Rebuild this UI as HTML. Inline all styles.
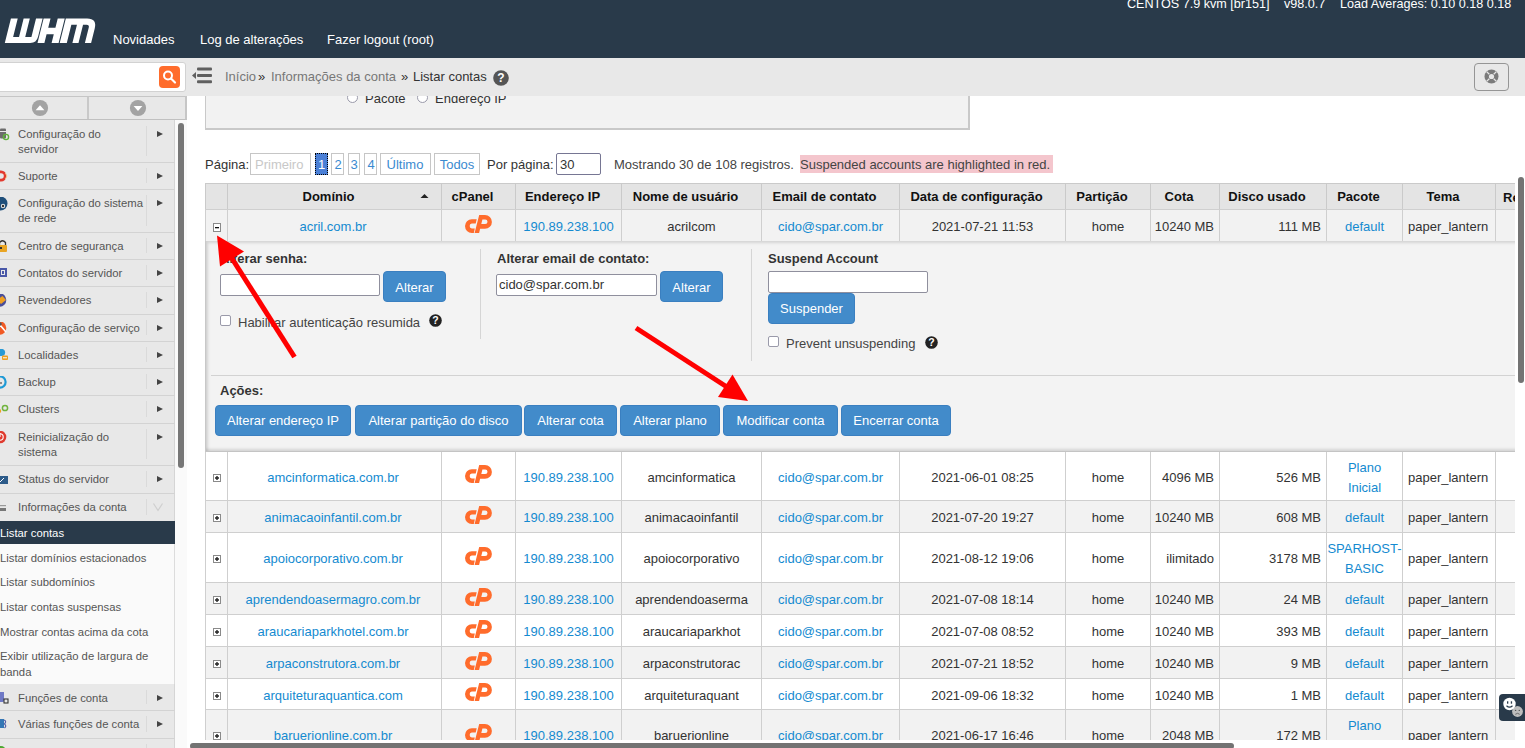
<!DOCTYPE html><html><head><meta charset="utf-8"><title>WHM</title><style>
*{box-sizing:border-box;margin:0;padding:0}
html,body{width:1525px;height:748px;overflow:hidden;background:#fff}
body{position:relative;font-family:"Liberation Sans",sans-serif;font-size:13px;color:#333}
.abs{position:absolute}
.t{position:absolute;white-space:nowrap;line-height:16px}
#hdr{position:absolute;left:0;top:0;width:1525px;height:58px;background:#293a4a}
#hdr .nav{position:absolute;top:33px;color:#fff;font-size:13px;line-height:14px}
#hdr .info{position:absolute;top:-3px;color:#fff;font-size:12.6px;line-height:14px}
#bcbar{position:absolute;left:0;top:58px;width:1525px;height:38px;background:#e8e8e8}
#search{position:absolute;left:-4px;top:62px;width:190px;height:30px;background:#fff;border:1px solid #d2d2d2;border-radius:3px}
#sbtn{position:absolute;left:159px;top:66px;width:21px;height:22px;background:#ff6c2c;border-radius:4px}
#scrollbtns{position:absolute;left:-2px;top:96px;width:189px;height:24px;background:#e8e8e8;border:1px solid #c6c6c6;border-right:2px solid #c6c6c6;border-bottom:1.5px solid #c0c0c0}
.sc{position:absolute;top:100px;width:16px;height:16px;border-radius:50%;background:#a0a0a0}
#menu{position:absolute;left:0;top:120px;width:175px;height:628px;background:#e8e8e8;border-right:1px solid #d5d5d5}
.mi{position:absolute;left:0;width:175px;border-bottom:1px solid #d3d3d3;font-size:11.3px;color:#555;line-height:15px}
.mi .lb{position:absolute;left:18px;white-space:nowrap}
.mi .sep{position:absolute;left:146px;top:6px;bottom:6px;border-left:1px solid #dadada}
.mi .ar{position:absolute;left:157px;width:0;height:0;border-left:6px solid #444;border-top:3.5px solid transparent;border-bottom:3.5px solid transparent}
.sub{position:absolute;left:0;width:175px;font-size:11.3px;color:#555;line-height:15px}
a{color:#148ad0;text-decoration:none}
.box{position:absolute;border:1px solid #c6c6c6;background:#fff;color:#2b8ad0}
table.grid{position:absolute;left:205px;top:183px;border-collapse:collapse;table-layout:fixed;width:1310px}
</style></head><body>
<div id="hdr">
<svg class="abs" style="left:0;top:0" width="100" height="50" viewBox="0 0 100 50"><g transform="matrix(1 0 -0.25 1 6.125 18.5)" fill="#fff"><path d="M4.8 0H11.6V18.4H17.5V0H23.7V18.4H29.9V0H36.5V18.3Q36.5 24.5 30.3 24.5H4.8Z"/><path d="M37.5 0H44.4V9.2H51.6V0H58.6V24.5H51.6V15.8H44.4V24.5H37.5Z"/><path d="M59.7 0H81Q91.1 0 91.1 10V24.5H84.9V9Q84.9 6.3 82 6.3H78.5V24.5H72.4V6.3H66.8V24.5H59.7Z"/></g></svg>
<div class="nav" style="left:113px">Novidades</div>
<div class="nav" style="left:200px">Log de alterações</div>
<div class="nav" style="left:327px">Fazer logout (root)</div>
<div class="info" style="left:1127px">CENTOS 7.9 kvm [br151]</div>
<div class="info" style="left:1284px">v98.0.7</div>
<div class="info" style="left:1340px">Load Averages: 0.10 0.18 0.18</div>
</div>
<div id="bcbar"></div>
<div id="search"></div>
<div id="sbtn"><svg width="21" height="22" viewBox="0 0 21 22"><circle cx="9" cy="9.5" r="4" fill="none" stroke="#fff" stroke-width="2"/><line x1="12" y1="12.5" x2="16" y2="16.5" stroke="#fff" stroke-width="2.2" stroke-linecap="round"/></svg></div>
<svg class="abs" style="left:190px;top:66px" width="24" height="20" viewBox="0 0 24 20"><rect x="7" y="1.5" width="15" height="3" rx="1" fill="#5f5f5f"/><rect x="7" y="8" width="15" height="3" rx="1" fill="#5f5f5f"/><rect x="7" y="14.3" width="15" height="3" rx="1" fill="#5f5f5f"/><path d="M2 9.5L6 6V13Z" fill="#5f5f5f"/></svg>
<div class="t" style="left:225px;top:69px;color:#777;font-size:13px">Início</div>
<div class="t" style="left:258px;top:69px;color:#333">»</div>
<div class="t" style="left:271px;top:69px;color:#777">Informações da conta</div>
<div class="t" style="left:401px;top:69px;color:#333">»</div>
<div class="t" style="left:413px;top:69px;color:#333">Listar contas</div>
<svg class="abs" style="left:493px;top:70px" width="16" height="16" viewBox="0 0 16 16"><circle cx="8" cy="8" r="7.8" fill="#555"/><text x="8" y="12.3" text-anchor="middle" font-family="Liberation Sans" font-weight="bold" font-size="12" fill="#fff">?</text></svg>
<div class="abs" style="left:1474px;top:63px;width:35px;height:28px;border:1.6px solid #959595;border-radius:4px"></div>
<svg class="abs" style="left:1483px;top:68px" width="17" height="17" viewBox="0 0 17 17"><circle cx="8.5" cy="8.5" r="7" fill="#7b7b7b"/><circle cx="8.5" cy="8.5" r="2.6" fill="#e8e8e8"/><g stroke="#e8e8e8" stroke-width="1.3"><line x1="3.6" y1="3.6" x2="6.3" y2="6.3"/><line x1="13.4" y1="3.6" x2="10.7" y2="6.3"/><line x1="3.6" y1="13.4" x2="6.3" y2="10.7"/><line x1="13.4" y1="13.4" x2="10.7" y2="10.7"/></g></svg>
<div id="scrollbtns"><div class="abs" style="left:88px;top:0;bottom:0;border-left:2px solid #c9c9c9"></div></div>
<svg class="abs" style="left:31px;top:99px" width="18" height="18" viewBox="0 0 18 18"><circle cx="9" cy="9" r="8.1" fill="#a3a3a3"/><path d="M4.6 11.3L9 6.2L13.4 11.3Z" fill="#fff"/></svg>
<svg class="abs" style="left:129px;top:99px" width="18" height="18" viewBox="0 0 18 18"><circle cx="9" cy="9" r="8.1" fill="#a3a3a3"/><path d="M4.6 7L9 12.1L13.4 7Z" fill="#fff"/></svg>
<div id="menu"></div>
<div class="mi" style="top:120px;height:43px">
<div class="lb" style="top:7.2px">Configuração do<br>servidor</div>
<div class="sep"></div><div class="ar" style="top:11px"></div>
<svg class="abs" style="left:0;top:8px" width="12" height="14" viewBox="0 0 12 14"><rect x="0" y="0.5" width="6" height="10" rx="1" fill="#6d6d6d"/><rect x="0" y="3" width="6" height="1" fill="#e8e8e8"/><circle cx="6" cy="9" r="2.6" fill="none" stroke="#5fb33b" stroke-width="1.4"/></svg>
</div>
<div class="mi" style="top:162px;height:28px">
<div class="lb" style="top:7.2px">Suporte</div>
<div class="sep"></div><div class="ar" style="top:11px"></div>
<svg class="abs" style="left:0;top:8px" width="12" height="14" viewBox="0 0 12 14"><circle cx="1" cy="6" r="5.5" fill="#e23a2f"/><circle cx="1" cy="6" r="2.8" fill="#e8e8e8"/><path d="M5.3 3 L7 6 L5.3 9" stroke="#f7d88a" fill="none" stroke-width="0.8"/></svg>
</div>
<div class="mi" style="top:189px;height:44px">
<div class="lb" style="top:7.2px">Configuração do sistema<br>de rede</div>
<div class="sep"></div><div class="ar" style="top:11px"></div>
<svg class="abs" style="left:0;top:8px" width="12" height="14" viewBox="0 0 12 14"><circle cx="0.5" cy="6.5" r="7" fill="#1f4f7a"/><circle cx="3" cy="9" r="2.2" fill="#e8e8e8"/><circle cx="3" cy="9" r="1.2" fill="#333"/></svg>
</div>
<div class="mi" style="top:232px;height:28px">
<div class="lb" style="top:7.2px">Centro de segurança</div>
<div class="sep"></div><div class="ar" style="top:11px"></div>
<svg class="abs" style="left:0;top:8px" width="12" height="14" viewBox="0 0 12 14"><rect x="-2" y="5" width="9" height="7" rx="1" fill="#e9a524"/><path d="M-0.5 5 V2.5 Q2.5 -1 5.5 2.5 V5" stroke="#333" stroke-width="1.3" fill="none"/><rect x="0" y="7" width="2" height="2" fill="#333"/></svg>
</div>
<div class="mi" style="top:259px;height:28px">
<div class="lb" style="top:7.2px">Contatos do servidor</div>
<div class="sep"></div><div class="ar" style="top:11px"></div>
<svg class="abs" style="left:0;top:8px" width="12" height="14" viewBox="0 0 12 14"><rect x="-2" y="1" width="9" height="9" fill="#4a58a8"/><rect x="1" y="3" width="4" height="5" fill="#e8e8e8"/><rect x="2" y="4" width="2" height="3" fill="#4a58a8"/></svg>
</div>
<div class="mi" style="top:286px;height:29px">
<div class="lb" style="top:7.2px">Revendedores</div>
<div class="sep"></div><div class="ar" style="top:11px"></div>
<svg class="abs" style="left:0;top:8px" width="12" height="14" viewBox="0 0 12 14"><circle cx="-0.5" cy="6" r="6.8" fill="#4a4f9a"/><path d="M-3 6 L2.5 2 L6 6 L1 10Z" fill="#f0a020"/></svg>
</div>
<div class="mi" style="top:314px;height:28px">
<div class="lb" style="top:7.2px">Configuração de serviço</div>
<div class="sep"></div><div class="ar" style="top:11px"></div>
<svg class="abs" style="left:0;top:8px" width="12" height="14" viewBox="0 0 12 14"><circle cx="-0.5" cy="6" r="6.8" fill="#f15a24"/><path d="M0 3 L6 10" stroke="#fff" stroke-width="1.6"/><circle cx="0" cy="2" r="1.8" fill="#555"/></svg>
</div>
<div class="mi" style="top:341px;height:28px">
<div class="lb" style="top:7.2px">Localidades</div>
<div class="sep"></div><div class="ar" style="top:11px"></div>
<svg class="abs" style="left:0;top:8px" width="12" height="14" viewBox="0 0 12 14"><circle cx="1.5" cy="3.5" r="3.6" fill="#2a9bd6"/><rect x="2" y="6.5" width="6" height="4.5" rx="1" fill="#f0a020"/><rect x="3" y="8.3" width="4" height="1" fill="#fff"/></svg>
</div>
<div class="mi" style="top:368px;height:28px">
<div class="lb" style="top:7.2px">Backup</div>
<div class="sep"></div><div class="ar" style="top:11px"></div>
<svg class="abs" style="left:0;top:8px" width="12" height="14" viewBox="0 0 12 14"><circle cx="0" cy="6" r="5.6" fill="none" stroke="#1e9ad6" stroke-width="2.2"/><path d="M-1 3.5 V7 H2" stroke="#333" stroke-width="1" fill="none"/></svg>
</div>
<div class="mi" style="top:395px;height:29px">
<div class="lb" style="top:7.2px">Clusters</div>
<div class="sep"></div><div class="ar" style="top:11px"></div>
<svg class="abs" style="left:0;top:8px" width="12" height="14" viewBox="0 0 12 14"><circle cx="5" cy="5" r="2.6" fill="none" stroke="#71b43e" stroke-width="1.5"/><circle cx="-1" cy="8" r="2.2" fill="#f0a020"/></svg>
</div>
<div class="mi" style="top:423px;height:43px">
<div class="lb" style="top:7.2px">Reinicialização do<br>sistema</div>
<div class="sep"></div><div class="ar" style="top:11px"></div>
<svg class="abs" style="left:0;top:8px" width="12" height="14" viewBox="0 0 12 14"><circle cx="0" cy="6" r="6.3" fill="#df3b2f"/><circle cx="0" cy="6" r="3.2" fill="none" stroke="#fff" stroke-width="1.1"/><path d="M0 2 V6" stroke="#fff" stroke-width="1.1"/></svg>
</div>
<div class="mi" style="top:465px;height:29px">
<div class="lb" style="top:7.2px">Status do servidor</div>
<div class="sep"></div><div class="ar" style="top:11px"></div>
<svg class="abs" style="left:0;top:8px" width="12" height="14" viewBox="0 0 12 14"><rect x="-3" y="3" width="11" height="8" fill="#2d5c8a"/><path d="M0 9 L4 5" stroke="#fff" stroke-width="1"/></svg>
</div>
<div class="mi" style="top:493px;height:29px">
<div class="lb" style="top:7.2px">Informações da conta</div>
<div class="sep"></div><svg class="abs" style="left:152px;top:9px" width="12" height="10" viewBox="0 0 12 10"><path d="M1.5 1.5 L6 8.5 L10.5 1.5" stroke="#cfcfcf" stroke-width="1.2" fill="none"/></svg>
<svg class="abs" style="left:0;top:8px" width="12" height="14" viewBox="0 0 12 14"><rect x="-2" y="4" width="8" height="1.2" fill="#999"/><rect x="-2" y="7" width="8" height="3" fill="#777"/></svg>
</div>
<div class="mi" style="top:684px;height:27px">
<div class="lb" style="top:7.2px">Funções de conta</div>
<div class="sep"></div><div class="ar" style="top:11px"></div>
<svg class="abs" style="left:0;top:8px" width="12" height="14" viewBox="0 0 12 14"><rect x="-2" y="-1" width="6" height="11" rx="1.5" fill="#6f79c6"/><rect x="4" y="7" width="4" height="4" fill="none" stroke="#333" stroke-width="1.1"/></svg>
</div>
<div class="mi" style="top:710px;height:29px">
<div class="lb" style="top:7.2px">Várias funções de conta</div>
<div class="sep"></div><div class="ar" style="top:11px"></div>
<svg class="abs" style="left:0;top:8px" width="12" height="14" viewBox="0 0 12 14"><rect x="-2" y="1" width="6" height="9" fill="#3477b5"/><path d="M4 2 Q7 3 4.5 6 Q7 8 4.5 10" stroke="#5560a8" stroke-width="1.2" fill="none"/></svg>
</div>
<div class="mi" style="top:738px;height:33px">
<div class="lb" style="top:7.2px">Transferências</div>
<div class="sep"></div><div class="ar" style="top:11px"></div>
<svg class="abs" style="left:0;top:8px" width="12" height="14" viewBox="0 0 12 14"><circle cx="1" cy="5" r="5" fill="#4ea832"/></svg>
</div>
<div class="abs" style="left:0;top:521px;width:175px;height:23px;background:#293a4a"></div>
<div class="t" style="left:0px;top:526px;color:#fff;font-size:11.3px;line-height:15px">Listar contas</div>
<div class="abs" style="left:0;top:544px;width:175px;height:140px;background:#fafafa;border-right:1px solid #dcdcdc"></div>
<div class="t" style="left:0px;top:551.1px;color:#555;font-size:11.3px;line-height:15px">Listar domínios estacionados</div>
<div class="t" style="left:0px;top:574.6px;color:#555;font-size:11.3px;line-height:15px">Listar subdomínios</div>
<div class="t" style="left:0px;top:599.6px;color:#555;font-size:11.3px;line-height:15px">Listar contas suspensas</div>
<div class="t" style="left:0px;top:624.6px;color:#555;font-size:11.3px;line-height:15px">Mostrar contas acima da cota</div>
<div class="t" style="left:0px;top:648.6px;color:#555;font-size:11.3px;line-height:15px">Exibir utilização de largura de</div>
<div class="t" style="left:0px;top:664.6px;color:#555;font-size:11.3px;line-height:15px">banda</div>
<div class="abs" style="left:175px;top:120px;width:12px;height:628px;background:#fafafa"></div>
<div class="abs" style="left:178px;top:123px;width:6px;height:345px;background:#777;border-radius:3px"></div>
<div class="abs" style="left:0;top:96px;width:1525px;height:40px;overflow:hidden"><div class="abs" style="left:0;top:-96px;width:1525px;height:200px">
<div class="abs" style="left:205px;top:60px;width:765px;height:70px;background:#f2f2f2;border:1px solid #c9c9c9;border-right-width:2px;border-bottom-width:2px"></div>
<div class="abs" style="left:347px;top:92px;width:11px;height:11px;border-radius:50%;border:1px solid #9a9aaa;background:#fff"></div>
<div class="t" style="left:365px;top:91px">Pacote</div>
<div class="abs" style="left:417px;top:92px;width:11px;height:11px;border-radius:50%;border:1px solid #9a9aaa;background:#fff"></div>
<div class="t" style="left:435px;top:91px">Endereço IP</div>
</div></div>
<div class="t" style="left:205px;top:157px;color:#333">Página:</div>
<div class="box" style="left:250px;top:153px;width:61px;height:22px;color:#c8c8c8"><span class="t" style="left:4px;top:3px">Primeiro</span></div>
<div class="abs" style="left:315px;top:153px;width:13px;height:22px;background:#4a7fd6;border:1px dotted #000"><span class="t" style="left:2px;top:3px;color:#fff">1</span></div>
<div class="box" style="left:331px;top:153px;width:13px;height:22px"><span class="t" style="left:6px;transform:translateX(-50%);top:3px;color:#3a8ad0">2</span></div>
<div class="box" style="left:348px;top:153px;width:12px;height:22px"><span class="t" style="left:5px;transform:translateX(-50%);top:3px;color:#3a8ad0">3</span></div>
<div class="box" style="left:364px;top:153px;width:13px;height:22px"><span class="t" style="left:6px;transform:translateX(-50%);top:3px;color:#3a8ad0">4</span></div>
<div class="box" style="left:380px;top:153px;width:51px;height:22px"><span class="t" style="left:24px;transform:translateX(-50%);top:3px;color:#3a8ad0">Último</span></div>
<div class="box" style="left:434px;top:153px;width:46px;height:22px"><span class="t" style="left:22px;transform:translateX(-50%);top:3px;color:#3a8ad0">Todos</span></div>
<div class="t" style="left:487px;top:157px">Por página:</div>
<div class="abs" style="left:556px;top:153px;width:45px;height:22px;border:1px solid #767693;border-radius:2px;background:#fff"><span class="t" style="left:3px;top:3px;color:#333">30</span></div>
<div class="t" style="left:614px;top:157px;color:#444">Mostrando 30 de 108 registros.</div>
<div class="abs" style="left:800px;top:155px;width:253px;height:18px;background:#f4c6cd"></div>
<div class="t" style="left:800px;top:157px;color:#444">Suspended accounts are highlighted in red.</div>
<div class="abs" style="left:0;top:0;width:1515px;height:740px;overflow:hidden">
<div class="abs" style="left:205px;top:183px;width:1400px;height:27px;background:#e4e4e4;border-top:1px solid #cacaca;border-bottom:1px solid #cacaca"></div>
<div class="abs" style="left:205px;top:183px;width:1px;height:27px;background:#cacaca"></div>
<div class="abs" style="left:227px;top:183px;width:1px;height:27px;background:#cacaca"></div>
<div class="abs" style="left:441px;top:183px;width:1px;height:27px;background:#cacaca"></div>
<div class="abs" style="left:515px;top:183px;width:1px;height:27px;background:#cacaca"></div>
<div class="abs" style="left:621px;top:183px;width:1px;height:27px;background:#cacaca"></div>
<div class="abs" style="left:761px;top:183px;width:1px;height:27px;background:#cacaca"></div>
<div class="abs" style="left:899px;top:183px;width:1px;height:27px;background:#cacaca"></div>
<div class="abs" style="left:1065px;top:183px;width:1px;height:27px;background:#cacaca"></div>
<div class="abs" style="left:1150px;top:183px;width:1px;height:27px;background:#cacaca"></div>
<div class="abs" style="left:1219px;top:183px;width:1px;height:27px;background:#cacaca"></div>
<div class="abs" style="left:1326px;top:183px;width:1px;height:27px;background:#cacaca"></div>
<div class="abs" style="left:1402px;top:183px;width:1px;height:27px;background:#cacaca"></div>
<div class="abs" style="left:1495px;top:183px;width:1px;height:27px;background:#cacaca"></div>
<div class="abs" style="left:228px;top:184px;width:201px;height:25px;line-height:20px;padding-top:2.5px;text-align:center;font-weight:bold;color:#111;white-space:nowrap">Domínio</div>
<div class="abs" style="left:442px;top:184px;width:61px;height:25px;line-height:20px;padding-top:2.5px;text-align:center;font-weight:bold;color:#111;white-space:nowrap">cPanel</div>
<div class="abs" style="left:516px;top:184px;width:93px;height:25px;line-height:20px;padding-top:2.5px;text-align:center;font-weight:bold;color:#111;white-space:nowrap">Endereço IP</div>
<div class="abs" style="left:622px;top:184px;width:127px;height:25px;line-height:20px;padding-top:2.5px;text-align:center;font-weight:bold;color:#111;white-space:nowrap">Nome de usuário</div>
<div class="abs" style="left:762px;top:184px;width:125px;height:25px;line-height:20px;padding-top:2.5px;text-align:center;font-weight:bold;color:#111;white-space:nowrap">Email de contato</div>
<div class="abs" style="left:900px;top:184px;width:153px;height:25px;line-height:20px;padding-top:2.5px;text-align:center;font-weight:bold;color:#111;white-space:nowrap">Data de configuração</div>
<div class="abs" style="left:1066px;top:184px;width:72px;height:25px;line-height:20px;padding-top:2.5px;text-align:center;font-weight:bold;color:#111;white-space:nowrap">Partição</div>
<div class="abs" style="left:1151px;top:184px;width:56px;height:25px;line-height:20px;padding-top:2.5px;text-align:center;font-weight:bold;color:#111;white-space:nowrap">Cota</div>
<div class="abs" style="left:1220px;top:184px;width:94px;height:25px;line-height:20px;padding-top:2.5px;text-align:center;font-weight:bold;color:#111;white-space:nowrap">Disco usado</div>
<div class="abs" style="left:1327px;top:184px;width:63px;height:25px;line-height:20px;padding-top:2.5px;text-align:center;font-weight:bold;color:#111;white-space:nowrap">Pacote</div>
<div class="abs" style="left:1403px;top:184px;width:80px;height:25px;line-height:20px;padding-top:2.5px;text-align:center;font-weight:bold;color:#111;white-space:nowrap">Tema</div>
<div class="t" style="left:1503px;top:188px;line-height:20px;font-weight:bold;color:#111">Revendedor</div>
<svg class="abs" style="left:420px;top:193px" width="9" height="6" viewBox="0 0 9 6"><path d="M0.5 5L4.5 1L8.5 5Z" fill="#222"/></svg>
<div class="abs" style="left:205px;top:209px;width:1400px;height:33px;background:#f2f2f2;border-top:1px solid #cfcfcf;border-bottom:1px solid #cfcfcf"></div>
<div class="abs" style="left:205px;top:209px;width:1px;height:33px;background:#cfcfcf"></div>
<div class="abs" style="left:227px;top:209px;width:1px;height:33px;background:#cfcfcf"></div>
<div class="abs" style="left:441px;top:209px;width:1px;height:33px;background:#cfcfcf"></div>
<div class="abs" style="left:515px;top:209px;width:1px;height:33px;background:#cfcfcf"></div>
<div class="abs" style="left:621px;top:209px;width:1px;height:33px;background:#cfcfcf"></div>
<div class="abs" style="left:761px;top:209px;width:1px;height:33px;background:#cfcfcf"></div>
<div class="abs" style="left:899px;top:209px;width:1px;height:33px;background:#cfcfcf"></div>
<div class="abs" style="left:1065px;top:209px;width:1px;height:33px;background:#cfcfcf"></div>
<div class="abs" style="left:1150px;top:209px;width:1px;height:33px;background:#cfcfcf"></div>
<div class="abs" style="left:1219px;top:209px;width:1px;height:33px;background:#cfcfcf"></div>
<div class="abs" style="left:1326px;top:209px;width:1px;height:33px;background:#cfcfcf"></div>
<div class="abs" style="left:1402px;top:209px;width:1px;height:33px;background:#cfcfcf"></div>
<div class="abs" style="left:1495px;top:209px;width:1px;height:33px;background:#cfcfcf"></div>
<svg class="abs" style="left:213px;top:223px" width="8" height="9" viewBox="0 0 8 9"><rect x="0.5" y="0.5" width="7" height="8" fill="#fff" stroke="#8a8a8a"/><rect x="2" y="4" width="4" height="1.3" fill="#111"/></svg>
<div class="abs" style="left:225px;top:210px;width:216px;height:31px;display:flex;align-items:center;justify-content:center;padding:0 6px;color:#333"><div style="position:relative;top:1.5px;line-height:20px;text-align:center;white-space:nowrap"><a>acril.com.br</a></div></div>
<svg class="abs" style="left:455px;top:210px" width="40" height="30" viewBox="0 0 40 30"><path d="M21.7 9.3H16.8A6.8 6.8 0 0 0 16.8 22.9H18.8L19.8 18.6H16.8A2.65 2.65 0 0 1 16.8 13.4H20.7Z" fill="#ff6c2c"/><path fill-rule="evenodd" d="M19.6 22.9H24.1L25.1 18.8H30A6.9 6.9 0 0 0 30 5H24.2ZM27.4 9.4H30.2A2.3 2.3 0 0 1 30.2 14H26.3Z" fill="#ff6c2c"/></svg>
<div class="abs" style="left:516px;top:210px;width:105px;height:31px;display:flex;align-items:center;justify-content:center;padding:0 6px;color:#333"><div style="position:relative;top:1.5px;line-height:20px;text-align:center;white-space:nowrap"><a>190.89.238.100</a></div></div>
<div class="abs" style="left:622px;top:210px;width:139px;height:31px;display:flex;align-items:center;justify-content:center;padding:0 6px;color:#333"><div style="position:relative;top:1.5px;line-height:20px;text-align:center;white-space:nowrap">acrilcom</div></div>
<div class="abs" style="left:762px;top:210px;width:137px;height:31px;display:flex;align-items:center;justify-content:center;padding:0 6px;color:#333"><div style="position:relative;top:1.5px;line-height:20px;text-align:center;white-space:nowrap"><a>cido@spar.com.br</a></div></div>
<div class="abs" style="left:900px;top:210px;width:165px;height:31px;display:flex;align-items:center;justify-content:center;padding:0 6px;color:#333"><div style="position:relative;top:1.5px;line-height:20px;text-align:center;white-space:nowrap">2021-07-21 11:53</div></div>
<div class="abs" style="left:1066px;top:210px;width:84px;height:31px;display:flex;align-items:center;justify-content:center;padding:0 6px;color:#333"><div style="position:relative;top:1.5px;line-height:20px;text-align:center;white-space:nowrap">home</div></div>
<div class="abs" style="left:1151px;top:210px;width:68px;height:31px;display:flex;align-items:center;justify-content:flex-end;padding:0 5px;color:#333"><div style="position:relative;top:1.5px;line-height:20px;text-align:center;white-space:nowrap">10240 MB</div></div>
<div class="abs" style="left:1220px;top:210px;width:106px;height:31px;display:flex;align-items:center;justify-content:flex-end;padding:0 5px;color:#333"><div style="position:relative;top:1.5px;line-height:20px;text-align:center;white-space:nowrap">111 MB</div></div>
<div class="abs" style="left:1327px;top:210px;width:75px;height:31px;display:flex;align-items:center;justify-content:center;padding:0 6px;color:#333"><div style="position:relative;top:1.5px;line-height:20px;text-align:center;white-space:nowrap"><a>default</a></div></div>
<div class="abs" style="left:1403px;top:210px;width:92px;height:31px;display:flex;align-items:center;justify-content:flex-start;padding:0 5px;color:#333"><div style="position:relative;top:1.5px;line-height:20px;text-align:center;white-space:nowrap">paper_lantern</div></div>
<div class="abs" style="left:205px;top:451px;width:1400px;height:50px;background:#fff;border-top:1px solid #cfcfcf;border-bottom:1px solid #cfcfcf"></div>
<div class="abs" style="left:205px;top:451px;width:1px;height:50px;background:#cfcfcf"></div>
<div class="abs" style="left:227px;top:451px;width:1px;height:50px;background:#cfcfcf"></div>
<div class="abs" style="left:441px;top:451px;width:1px;height:50px;background:#cfcfcf"></div>
<div class="abs" style="left:515px;top:451px;width:1px;height:50px;background:#cfcfcf"></div>
<div class="abs" style="left:621px;top:451px;width:1px;height:50px;background:#cfcfcf"></div>
<div class="abs" style="left:761px;top:451px;width:1px;height:50px;background:#cfcfcf"></div>
<div class="abs" style="left:899px;top:451px;width:1px;height:50px;background:#cfcfcf"></div>
<div class="abs" style="left:1065px;top:451px;width:1px;height:50px;background:#cfcfcf"></div>
<div class="abs" style="left:1150px;top:451px;width:1px;height:50px;background:#cfcfcf"></div>
<div class="abs" style="left:1219px;top:451px;width:1px;height:50px;background:#cfcfcf"></div>
<div class="abs" style="left:1326px;top:451px;width:1px;height:50px;background:#cfcfcf"></div>
<div class="abs" style="left:1402px;top:451px;width:1px;height:50px;background:#cfcfcf"></div>
<div class="abs" style="left:1495px;top:451px;width:1px;height:50px;background:#cfcfcf"></div>
<svg class="abs" style="left:213px;top:474px" width="8" height="8" viewBox="0 0 8 8"><rect x="0.5" y="0.5" width="7" height="7" fill="#fff" stroke="#8a8a8a"/><path d="M3 2.2H5V3H5.8V5H5V5.8H3V5H2.2V3H3Z" fill="#333"/></svg>
<div class="abs" style="left:225px;top:452px;width:216px;height:48px;display:flex;align-items:center;justify-content:center;padding:0 6px;color:#333"><div style="position:relative;top:1.5px;line-height:20px;text-align:center;white-space:nowrap"><a>amcinformatica.com.br</a></div></div>
<svg class="abs" style="left:455px;top:460px" width="40" height="30" viewBox="0 0 40 30"><path d="M21.7 9.3H16.8A6.8 6.8 0 0 0 16.8 22.9H18.8L19.8 18.6H16.8A2.65 2.65 0 0 1 16.8 13.4H20.7Z" fill="#ff6c2c"/><path fill-rule="evenodd" d="M19.6 22.9H24.1L25.1 18.8H30A6.9 6.9 0 0 0 30 5H24.2ZM27.4 9.4H30.2A2.3 2.3 0 0 1 30.2 14H26.3Z" fill="#ff6c2c"/></svg>
<div class="abs" style="left:516px;top:452px;width:105px;height:48px;display:flex;align-items:center;justify-content:center;padding:0 6px;color:#333"><div style="position:relative;top:1.5px;line-height:20px;text-align:center;white-space:nowrap"><a>190.89.238.100</a></div></div>
<div class="abs" style="left:622px;top:452px;width:139px;height:48px;display:flex;align-items:center;justify-content:center;padding:0 6px;color:#333"><div style="position:relative;top:1.5px;line-height:20px;text-align:center;white-space:nowrap">amcinformatica</div></div>
<div class="abs" style="left:762px;top:452px;width:137px;height:48px;display:flex;align-items:center;justify-content:center;padding:0 6px;color:#333"><div style="position:relative;top:1.5px;line-height:20px;text-align:center;white-space:nowrap"><a>cido@spar.com.br</a></div></div>
<div class="abs" style="left:900px;top:452px;width:165px;height:48px;display:flex;align-items:center;justify-content:center;padding:0 6px;color:#333"><div style="position:relative;top:1.5px;line-height:20px;text-align:center;white-space:nowrap">2021-06-01 08:25</div></div>
<div class="abs" style="left:1066px;top:452px;width:84px;height:48px;display:flex;align-items:center;justify-content:center;padding:0 6px;color:#333"><div style="position:relative;top:1.5px;line-height:20px;text-align:center;white-space:nowrap">home</div></div>
<div class="abs" style="left:1151px;top:452px;width:68px;height:48px;display:flex;align-items:center;justify-content:flex-end;padding:0 5px;color:#333"><div style="position:relative;top:1.5px;line-height:20px;text-align:center;white-space:nowrap">4096 MB</div></div>
<div class="abs" style="left:1220px;top:452px;width:106px;height:48px;display:flex;align-items:center;justify-content:flex-end;padding:0 5px;color:#333"><div style="position:relative;top:1.5px;line-height:20px;text-align:center;white-space:nowrap">526 MB</div></div>
<div class="abs" style="left:1327px;top:452px;width:75px;height:48px;display:flex;align-items:center;justify-content:center;padding:0 6px;color:#333"><div style="position:relative;top:1.5px;line-height:20px;text-align:center;white-space:nowrap"><a>Plano<br>Inicial</a></div></div>
<div class="abs" style="left:1403px;top:452px;width:92px;height:48px;display:flex;align-items:center;justify-content:flex-start;padding:0 5px;color:#333"><div style="position:relative;top:1.5px;line-height:20px;text-align:center;white-space:nowrap">paper_lantern</div></div>
<div class="abs" style="left:205px;top:500px;width:1400px;height:33px;background:#f2f2f2;border-top:1px solid #cfcfcf;border-bottom:1px solid #cfcfcf"></div>
<div class="abs" style="left:205px;top:500px;width:1px;height:33px;background:#cfcfcf"></div>
<div class="abs" style="left:227px;top:500px;width:1px;height:33px;background:#cfcfcf"></div>
<div class="abs" style="left:441px;top:500px;width:1px;height:33px;background:#cfcfcf"></div>
<div class="abs" style="left:515px;top:500px;width:1px;height:33px;background:#cfcfcf"></div>
<div class="abs" style="left:621px;top:500px;width:1px;height:33px;background:#cfcfcf"></div>
<div class="abs" style="left:761px;top:500px;width:1px;height:33px;background:#cfcfcf"></div>
<div class="abs" style="left:899px;top:500px;width:1px;height:33px;background:#cfcfcf"></div>
<div class="abs" style="left:1065px;top:500px;width:1px;height:33px;background:#cfcfcf"></div>
<div class="abs" style="left:1150px;top:500px;width:1px;height:33px;background:#cfcfcf"></div>
<div class="abs" style="left:1219px;top:500px;width:1px;height:33px;background:#cfcfcf"></div>
<div class="abs" style="left:1326px;top:500px;width:1px;height:33px;background:#cfcfcf"></div>
<div class="abs" style="left:1402px;top:500px;width:1px;height:33px;background:#cfcfcf"></div>
<div class="abs" style="left:1495px;top:500px;width:1px;height:33px;background:#cfcfcf"></div>
<svg class="abs" style="left:213px;top:514px" width="8" height="8" viewBox="0 0 8 8"><rect x="0.5" y="0.5" width="7" height="7" fill="#fff" stroke="#8a8a8a"/><path d="M3 2.2H5V3H5.8V5H5V5.8H3V5H2.2V3H3Z" fill="#333"/></svg>
<div class="abs" style="left:225px;top:501px;width:216px;height:31px;display:flex;align-items:center;justify-content:center;padding:0 6px;color:#333"><div style="position:relative;top:1.5px;line-height:20px;text-align:center;white-space:nowrap"><a>animacaoinfantil.com.br</a></div></div>
<svg class="abs" style="left:455px;top:501px" width="40" height="30" viewBox="0 0 40 30"><path d="M21.7 9.3H16.8A6.8 6.8 0 0 0 16.8 22.9H18.8L19.8 18.6H16.8A2.65 2.65 0 0 1 16.8 13.4H20.7Z" fill="#ff6c2c"/><path fill-rule="evenodd" d="M19.6 22.9H24.1L25.1 18.8H30A6.9 6.9 0 0 0 30 5H24.2ZM27.4 9.4H30.2A2.3 2.3 0 0 1 30.2 14H26.3Z" fill="#ff6c2c"/></svg>
<div class="abs" style="left:516px;top:501px;width:105px;height:31px;display:flex;align-items:center;justify-content:center;padding:0 6px;color:#333"><div style="position:relative;top:1.5px;line-height:20px;text-align:center;white-space:nowrap"><a>190.89.238.100</a></div></div>
<div class="abs" style="left:622px;top:501px;width:139px;height:31px;display:flex;align-items:center;justify-content:center;padding:0 6px;color:#333"><div style="position:relative;top:1.5px;line-height:20px;text-align:center;white-space:nowrap">animacaoinfantil</div></div>
<div class="abs" style="left:762px;top:501px;width:137px;height:31px;display:flex;align-items:center;justify-content:center;padding:0 6px;color:#333"><div style="position:relative;top:1.5px;line-height:20px;text-align:center;white-space:nowrap"><a>cido@spar.com.br</a></div></div>
<div class="abs" style="left:900px;top:501px;width:165px;height:31px;display:flex;align-items:center;justify-content:center;padding:0 6px;color:#333"><div style="position:relative;top:1.5px;line-height:20px;text-align:center;white-space:nowrap">2021-07-20 19:27</div></div>
<div class="abs" style="left:1066px;top:501px;width:84px;height:31px;display:flex;align-items:center;justify-content:center;padding:0 6px;color:#333"><div style="position:relative;top:1.5px;line-height:20px;text-align:center;white-space:nowrap">home</div></div>
<div class="abs" style="left:1151px;top:501px;width:68px;height:31px;display:flex;align-items:center;justify-content:flex-end;padding:0 5px;color:#333"><div style="position:relative;top:1.5px;line-height:20px;text-align:center;white-space:nowrap">10240 MB</div></div>
<div class="abs" style="left:1220px;top:501px;width:106px;height:31px;display:flex;align-items:center;justify-content:flex-end;padding:0 5px;color:#333"><div style="position:relative;top:1.5px;line-height:20px;text-align:center;white-space:nowrap">608 MB</div></div>
<div class="abs" style="left:1327px;top:501px;width:75px;height:31px;display:flex;align-items:center;justify-content:center;padding:0 6px;color:#333"><div style="position:relative;top:1.5px;line-height:20px;text-align:center;white-space:nowrap"><a>default</a></div></div>
<div class="abs" style="left:1403px;top:501px;width:92px;height:31px;display:flex;align-items:center;justify-content:flex-start;padding:0 5px;color:#333"><div style="position:relative;top:1.5px;line-height:20px;text-align:center;white-space:nowrap">paper_lantern</div></div>
<div class="abs" style="left:205px;top:532px;width:1400px;height:51px;background:#fff;border-top:1px solid #cfcfcf;border-bottom:1px solid #cfcfcf"></div>
<div class="abs" style="left:205px;top:532px;width:1px;height:51px;background:#cfcfcf"></div>
<div class="abs" style="left:227px;top:532px;width:1px;height:51px;background:#cfcfcf"></div>
<div class="abs" style="left:441px;top:532px;width:1px;height:51px;background:#cfcfcf"></div>
<div class="abs" style="left:515px;top:532px;width:1px;height:51px;background:#cfcfcf"></div>
<div class="abs" style="left:621px;top:532px;width:1px;height:51px;background:#cfcfcf"></div>
<div class="abs" style="left:761px;top:532px;width:1px;height:51px;background:#cfcfcf"></div>
<div class="abs" style="left:899px;top:532px;width:1px;height:51px;background:#cfcfcf"></div>
<div class="abs" style="left:1065px;top:532px;width:1px;height:51px;background:#cfcfcf"></div>
<div class="abs" style="left:1150px;top:532px;width:1px;height:51px;background:#cfcfcf"></div>
<div class="abs" style="left:1219px;top:532px;width:1px;height:51px;background:#cfcfcf"></div>
<div class="abs" style="left:1326px;top:532px;width:1px;height:51px;background:#cfcfcf"></div>
<div class="abs" style="left:1402px;top:532px;width:1px;height:51px;background:#cfcfcf"></div>
<div class="abs" style="left:1495px;top:532px;width:1px;height:51px;background:#cfcfcf"></div>
<svg class="abs" style="left:213px;top:555px" width="8" height="8" viewBox="0 0 8 8"><rect x="0.5" y="0.5" width="7" height="7" fill="#fff" stroke="#8a8a8a"/><path d="M3 2.2H5V3H5.8V5H5V5.8H3V5H2.2V3H3Z" fill="#333"/></svg>
<div class="abs" style="left:225px;top:533px;width:216px;height:49px;display:flex;align-items:center;justify-content:center;padding:0 6px;color:#333"><div style="position:relative;top:1.5px;line-height:20px;text-align:center;white-space:nowrap"><a>apoiocorporativo.com.br</a></div></div>
<svg class="abs" style="left:455px;top:542px" width="40" height="30" viewBox="0 0 40 30"><path d="M21.7 9.3H16.8A6.8 6.8 0 0 0 16.8 22.9H18.8L19.8 18.6H16.8A2.65 2.65 0 0 1 16.8 13.4H20.7Z" fill="#ff6c2c"/><path fill-rule="evenodd" d="M19.6 22.9H24.1L25.1 18.8H30A6.9 6.9 0 0 0 30 5H24.2ZM27.4 9.4H30.2A2.3 2.3 0 0 1 30.2 14H26.3Z" fill="#ff6c2c"/></svg>
<div class="abs" style="left:516px;top:533px;width:105px;height:49px;display:flex;align-items:center;justify-content:center;padding:0 6px;color:#333"><div style="position:relative;top:1.5px;line-height:20px;text-align:center;white-space:nowrap"><a>190.89.238.100</a></div></div>
<div class="abs" style="left:622px;top:533px;width:139px;height:49px;display:flex;align-items:center;justify-content:center;padding:0 6px;color:#333"><div style="position:relative;top:1.5px;line-height:20px;text-align:center;white-space:nowrap">apoiocorporativo</div></div>
<div class="abs" style="left:762px;top:533px;width:137px;height:49px;display:flex;align-items:center;justify-content:center;padding:0 6px;color:#333"><div style="position:relative;top:1.5px;line-height:20px;text-align:center;white-space:nowrap"><a>cido@spar.com.br</a></div></div>
<div class="abs" style="left:900px;top:533px;width:165px;height:49px;display:flex;align-items:center;justify-content:center;padding:0 6px;color:#333"><div style="position:relative;top:1.5px;line-height:20px;text-align:center;white-space:nowrap">2021-08-12 19:06</div></div>
<div class="abs" style="left:1066px;top:533px;width:84px;height:49px;display:flex;align-items:center;justify-content:center;padding:0 6px;color:#333"><div style="position:relative;top:1.5px;line-height:20px;text-align:center;white-space:nowrap">home</div></div>
<div class="abs" style="left:1151px;top:533px;width:68px;height:49px;display:flex;align-items:center;justify-content:flex-end;padding:0 5px;color:#333"><div style="position:relative;top:1.5px;line-height:20px;text-align:center;white-space:nowrap">ilimitado</div></div>
<div class="abs" style="left:1220px;top:533px;width:106px;height:49px;display:flex;align-items:center;justify-content:flex-end;padding:0 5px;color:#333"><div style="position:relative;top:1.5px;line-height:20px;text-align:center;white-space:nowrap">3178 MB</div></div>
<div class="abs" style="left:1327px;top:533px;width:75px;height:49px;display:flex;align-items:center;justify-content:center;padding:0 6px;color:#333"><div style="position:relative;top:1.5px;line-height:20px;text-align:center;white-space:nowrap"><a>SPARHOST-<br>BASIC</a></div></div>
<div class="abs" style="left:1403px;top:533px;width:92px;height:49px;display:flex;align-items:center;justify-content:flex-start;padding:0 5px;color:#333"><div style="position:relative;top:1.5px;line-height:20px;text-align:center;white-space:nowrap">paper_lantern</div></div>
<div class="abs" style="left:205px;top:582px;width:1400px;height:33px;background:#f2f2f2;border-top:1px solid #cfcfcf;border-bottom:1px solid #cfcfcf"></div>
<div class="abs" style="left:205px;top:582px;width:1px;height:33px;background:#cfcfcf"></div>
<div class="abs" style="left:227px;top:582px;width:1px;height:33px;background:#cfcfcf"></div>
<div class="abs" style="left:441px;top:582px;width:1px;height:33px;background:#cfcfcf"></div>
<div class="abs" style="left:515px;top:582px;width:1px;height:33px;background:#cfcfcf"></div>
<div class="abs" style="left:621px;top:582px;width:1px;height:33px;background:#cfcfcf"></div>
<div class="abs" style="left:761px;top:582px;width:1px;height:33px;background:#cfcfcf"></div>
<div class="abs" style="left:899px;top:582px;width:1px;height:33px;background:#cfcfcf"></div>
<div class="abs" style="left:1065px;top:582px;width:1px;height:33px;background:#cfcfcf"></div>
<div class="abs" style="left:1150px;top:582px;width:1px;height:33px;background:#cfcfcf"></div>
<div class="abs" style="left:1219px;top:582px;width:1px;height:33px;background:#cfcfcf"></div>
<div class="abs" style="left:1326px;top:582px;width:1px;height:33px;background:#cfcfcf"></div>
<div class="abs" style="left:1402px;top:582px;width:1px;height:33px;background:#cfcfcf"></div>
<div class="abs" style="left:1495px;top:582px;width:1px;height:33px;background:#cfcfcf"></div>
<svg class="abs" style="left:213px;top:596px" width="8" height="8" viewBox="0 0 8 8"><rect x="0.5" y="0.5" width="7" height="7" fill="#fff" stroke="#8a8a8a"/><path d="M3 2.2H5V3H5.8V5H5V5.8H3V5H2.2V3H3Z" fill="#333"/></svg>
<div class="abs" style="left:225px;top:583px;width:216px;height:31px;display:flex;align-items:center;justify-content:center;padding:0 6px;color:#333"><div style="position:relative;top:1.5px;line-height:20px;text-align:center;white-space:nowrap"><a>aprendendoasermagro.com.br</a></div></div>
<svg class="abs" style="left:455px;top:583px" width="40" height="30" viewBox="0 0 40 30"><path d="M21.7 9.3H16.8A6.8 6.8 0 0 0 16.8 22.9H18.8L19.8 18.6H16.8A2.65 2.65 0 0 1 16.8 13.4H20.7Z" fill="#ff6c2c"/><path fill-rule="evenodd" d="M19.6 22.9H24.1L25.1 18.8H30A6.9 6.9 0 0 0 30 5H24.2ZM27.4 9.4H30.2A2.3 2.3 0 0 1 30.2 14H26.3Z" fill="#ff6c2c"/></svg>
<div class="abs" style="left:516px;top:583px;width:105px;height:31px;display:flex;align-items:center;justify-content:center;padding:0 6px;color:#333"><div style="position:relative;top:1.5px;line-height:20px;text-align:center;white-space:nowrap"><a>190.89.238.100</a></div></div>
<div class="abs" style="left:622px;top:583px;width:139px;height:31px;display:flex;align-items:center;justify-content:center;padding:0 6px;color:#333"><div style="position:relative;top:1.5px;line-height:20px;text-align:center;white-space:nowrap">aprendendoaserma</div></div>
<div class="abs" style="left:762px;top:583px;width:137px;height:31px;display:flex;align-items:center;justify-content:center;padding:0 6px;color:#333"><div style="position:relative;top:1.5px;line-height:20px;text-align:center;white-space:nowrap"><a>cido@spar.com.br</a></div></div>
<div class="abs" style="left:900px;top:583px;width:165px;height:31px;display:flex;align-items:center;justify-content:center;padding:0 6px;color:#333"><div style="position:relative;top:1.5px;line-height:20px;text-align:center;white-space:nowrap">2021-07-08 18:14</div></div>
<div class="abs" style="left:1066px;top:583px;width:84px;height:31px;display:flex;align-items:center;justify-content:center;padding:0 6px;color:#333"><div style="position:relative;top:1.5px;line-height:20px;text-align:center;white-space:nowrap">home</div></div>
<div class="abs" style="left:1151px;top:583px;width:68px;height:31px;display:flex;align-items:center;justify-content:flex-end;padding:0 5px;color:#333"><div style="position:relative;top:1.5px;line-height:20px;text-align:center;white-space:nowrap">10240 MB</div></div>
<div class="abs" style="left:1220px;top:583px;width:106px;height:31px;display:flex;align-items:center;justify-content:flex-end;padding:0 5px;color:#333"><div style="position:relative;top:1.5px;line-height:20px;text-align:center;white-space:nowrap">24 MB</div></div>
<div class="abs" style="left:1327px;top:583px;width:75px;height:31px;display:flex;align-items:center;justify-content:center;padding:0 6px;color:#333"><div style="position:relative;top:1.5px;line-height:20px;text-align:center;white-space:nowrap"><a>default</a></div></div>
<div class="abs" style="left:1403px;top:583px;width:92px;height:31px;display:flex;align-items:center;justify-content:flex-start;padding:0 5px;color:#333"><div style="position:relative;top:1.5px;line-height:20px;text-align:center;white-space:nowrap">paper_lantern</div></div>
<div class="abs" style="left:205px;top:614px;width:1400px;height:33px;background:#fff;border-top:1px solid #cfcfcf;border-bottom:1px solid #cfcfcf"></div>
<div class="abs" style="left:205px;top:614px;width:1px;height:33px;background:#cfcfcf"></div>
<div class="abs" style="left:227px;top:614px;width:1px;height:33px;background:#cfcfcf"></div>
<div class="abs" style="left:441px;top:614px;width:1px;height:33px;background:#cfcfcf"></div>
<div class="abs" style="left:515px;top:614px;width:1px;height:33px;background:#cfcfcf"></div>
<div class="abs" style="left:621px;top:614px;width:1px;height:33px;background:#cfcfcf"></div>
<div class="abs" style="left:761px;top:614px;width:1px;height:33px;background:#cfcfcf"></div>
<div class="abs" style="left:899px;top:614px;width:1px;height:33px;background:#cfcfcf"></div>
<div class="abs" style="left:1065px;top:614px;width:1px;height:33px;background:#cfcfcf"></div>
<div class="abs" style="left:1150px;top:614px;width:1px;height:33px;background:#cfcfcf"></div>
<div class="abs" style="left:1219px;top:614px;width:1px;height:33px;background:#cfcfcf"></div>
<div class="abs" style="left:1326px;top:614px;width:1px;height:33px;background:#cfcfcf"></div>
<div class="abs" style="left:1402px;top:614px;width:1px;height:33px;background:#cfcfcf"></div>
<div class="abs" style="left:1495px;top:614px;width:1px;height:33px;background:#cfcfcf"></div>
<svg class="abs" style="left:213px;top:628px" width="8" height="8" viewBox="0 0 8 8"><rect x="0.5" y="0.5" width="7" height="7" fill="#fff" stroke="#8a8a8a"/><path d="M3 2.2H5V3H5.8V5H5V5.8H3V5H2.2V3H3Z" fill="#333"/></svg>
<div class="abs" style="left:225px;top:615px;width:216px;height:31px;display:flex;align-items:center;justify-content:center;padding:0 6px;color:#333"><div style="position:relative;top:1.5px;line-height:20px;text-align:center;white-space:nowrap"><a>araucariaparkhotel.com.br</a></div></div>
<svg class="abs" style="left:455px;top:615px" width="40" height="30" viewBox="0 0 40 30"><path d="M21.7 9.3H16.8A6.8 6.8 0 0 0 16.8 22.9H18.8L19.8 18.6H16.8A2.65 2.65 0 0 1 16.8 13.4H20.7Z" fill="#ff6c2c"/><path fill-rule="evenodd" d="M19.6 22.9H24.1L25.1 18.8H30A6.9 6.9 0 0 0 30 5H24.2ZM27.4 9.4H30.2A2.3 2.3 0 0 1 30.2 14H26.3Z" fill="#ff6c2c"/></svg>
<div class="abs" style="left:516px;top:615px;width:105px;height:31px;display:flex;align-items:center;justify-content:center;padding:0 6px;color:#333"><div style="position:relative;top:1.5px;line-height:20px;text-align:center;white-space:nowrap"><a>190.89.238.100</a></div></div>
<div class="abs" style="left:622px;top:615px;width:139px;height:31px;display:flex;align-items:center;justify-content:center;padding:0 6px;color:#333"><div style="position:relative;top:1.5px;line-height:20px;text-align:center;white-space:nowrap">araucariaparkhot</div></div>
<div class="abs" style="left:762px;top:615px;width:137px;height:31px;display:flex;align-items:center;justify-content:center;padding:0 6px;color:#333"><div style="position:relative;top:1.5px;line-height:20px;text-align:center;white-space:nowrap"><a>cido@spar.com.br</a></div></div>
<div class="abs" style="left:900px;top:615px;width:165px;height:31px;display:flex;align-items:center;justify-content:center;padding:0 6px;color:#333"><div style="position:relative;top:1.5px;line-height:20px;text-align:center;white-space:nowrap">2021-07-08 08:52</div></div>
<div class="abs" style="left:1066px;top:615px;width:84px;height:31px;display:flex;align-items:center;justify-content:center;padding:0 6px;color:#333"><div style="position:relative;top:1.5px;line-height:20px;text-align:center;white-space:nowrap">home</div></div>
<div class="abs" style="left:1151px;top:615px;width:68px;height:31px;display:flex;align-items:center;justify-content:flex-end;padding:0 5px;color:#333"><div style="position:relative;top:1.5px;line-height:20px;text-align:center;white-space:nowrap">10240 MB</div></div>
<div class="abs" style="left:1220px;top:615px;width:106px;height:31px;display:flex;align-items:center;justify-content:flex-end;padding:0 5px;color:#333"><div style="position:relative;top:1.5px;line-height:20px;text-align:center;white-space:nowrap">393 MB</div></div>
<div class="abs" style="left:1327px;top:615px;width:75px;height:31px;display:flex;align-items:center;justify-content:center;padding:0 6px;color:#333"><div style="position:relative;top:1.5px;line-height:20px;text-align:center;white-space:nowrap"><a>default</a></div></div>
<div class="abs" style="left:1403px;top:615px;width:92px;height:31px;display:flex;align-items:center;justify-content:flex-start;padding:0 5px;color:#333"><div style="position:relative;top:1.5px;line-height:20px;text-align:center;white-space:nowrap">paper_lantern</div></div>
<div class="abs" style="left:205px;top:646px;width:1400px;height:33px;background:#f2f2f2;border-top:1px solid #cfcfcf;border-bottom:1px solid #cfcfcf"></div>
<div class="abs" style="left:205px;top:646px;width:1px;height:33px;background:#cfcfcf"></div>
<div class="abs" style="left:227px;top:646px;width:1px;height:33px;background:#cfcfcf"></div>
<div class="abs" style="left:441px;top:646px;width:1px;height:33px;background:#cfcfcf"></div>
<div class="abs" style="left:515px;top:646px;width:1px;height:33px;background:#cfcfcf"></div>
<div class="abs" style="left:621px;top:646px;width:1px;height:33px;background:#cfcfcf"></div>
<div class="abs" style="left:761px;top:646px;width:1px;height:33px;background:#cfcfcf"></div>
<div class="abs" style="left:899px;top:646px;width:1px;height:33px;background:#cfcfcf"></div>
<div class="abs" style="left:1065px;top:646px;width:1px;height:33px;background:#cfcfcf"></div>
<div class="abs" style="left:1150px;top:646px;width:1px;height:33px;background:#cfcfcf"></div>
<div class="abs" style="left:1219px;top:646px;width:1px;height:33px;background:#cfcfcf"></div>
<div class="abs" style="left:1326px;top:646px;width:1px;height:33px;background:#cfcfcf"></div>
<div class="abs" style="left:1402px;top:646px;width:1px;height:33px;background:#cfcfcf"></div>
<div class="abs" style="left:1495px;top:646px;width:1px;height:33px;background:#cfcfcf"></div>
<svg class="abs" style="left:213px;top:660px" width="8" height="8" viewBox="0 0 8 8"><rect x="0.5" y="0.5" width="7" height="7" fill="#fff" stroke="#8a8a8a"/><path d="M3 2.2H5V3H5.8V5H5V5.8H3V5H2.2V3H3Z" fill="#333"/></svg>
<div class="abs" style="left:225px;top:647px;width:216px;height:31px;display:flex;align-items:center;justify-content:center;padding:0 6px;color:#333"><div style="position:relative;top:1.5px;line-height:20px;text-align:center;white-space:nowrap"><a>arpaconstrutora.com.br</a></div></div>
<svg class="abs" style="left:455px;top:647px" width="40" height="30" viewBox="0 0 40 30"><path d="M21.7 9.3H16.8A6.8 6.8 0 0 0 16.8 22.9H18.8L19.8 18.6H16.8A2.65 2.65 0 0 1 16.8 13.4H20.7Z" fill="#ff6c2c"/><path fill-rule="evenodd" d="M19.6 22.9H24.1L25.1 18.8H30A6.9 6.9 0 0 0 30 5H24.2ZM27.4 9.4H30.2A2.3 2.3 0 0 1 30.2 14H26.3Z" fill="#ff6c2c"/></svg>
<div class="abs" style="left:516px;top:647px;width:105px;height:31px;display:flex;align-items:center;justify-content:center;padding:0 6px;color:#333"><div style="position:relative;top:1.5px;line-height:20px;text-align:center;white-space:nowrap"><a>190.89.238.100</a></div></div>
<div class="abs" style="left:622px;top:647px;width:139px;height:31px;display:flex;align-items:center;justify-content:center;padding:0 6px;color:#333"><div style="position:relative;top:1.5px;line-height:20px;text-align:center;white-space:nowrap">arpaconstrutorac</div></div>
<div class="abs" style="left:762px;top:647px;width:137px;height:31px;display:flex;align-items:center;justify-content:center;padding:0 6px;color:#333"><div style="position:relative;top:1.5px;line-height:20px;text-align:center;white-space:nowrap"><a>cido@spar.com.br</a></div></div>
<div class="abs" style="left:900px;top:647px;width:165px;height:31px;display:flex;align-items:center;justify-content:center;padding:0 6px;color:#333"><div style="position:relative;top:1.5px;line-height:20px;text-align:center;white-space:nowrap">2021-07-21 18:52</div></div>
<div class="abs" style="left:1066px;top:647px;width:84px;height:31px;display:flex;align-items:center;justify-content:center;padding:0 6px;color:#333"><div style="position:relative;top:1.5px;line-height:20px;text-align:center;white-space:nowrap">home</div></div>
<div class="abs" style="left:1151px;top:647px;width:68px;height:31px;display:flex;align-items:center;justify-content:flex-end;padding:0 5px;color:#333"><div style="position:relative;top:1.5px;line-height:20px;text-align:center;white-space:nowrap">10240 MB</div></div>
<div class="abs" style="left:1220px;top:647px;width:106px;height:31px;display:flex;align-items:center;justify-content:flex-end;padding:0 5px;color:#333"><div style="position:relative;top:1.5px;line-height:20px;text-align:center;white-space:nowrap">9 MB</div></div>
<div class="abs" style="left:1327px;top:647px;width:75px;height:31px;display:flex;align-items:center;justify-content:center;padding:0 6px;color:#333"><div style="position:relative;top:1.5px;line-height:20px;text-align:center;white-space:nowrap"><a>default</a></div></div>
<div class="abs" style="left:1403px;top:647px;width:92px;height:31px;display:flex;align-items:center;justify-content:flex-start;padding:0 5px;color:#333"><div style="position:relative;top:1.5px;line-height:20px;text-align:center;white-space:nowrap">paper_lantern</div></div>
<div class="abs" style="left:205px;top:678px;width:1400px;height:32px;background:#fff;border-top:1px solid #cfcfcf;border-bottom:1px solid #cfcfcf"></div>
<div class="abs" style="left:205px;top:678px;width:1px;height:32px;background:#cfcfcf"></div>
<div class="abs" style="left:227px;top:678px;width:1px;height:32px;background:#cfcfcf"></div>
<div class="abs" style="left:441px;top:678px;width:1px;height:32px;background:#cfcfcf"></div>
<div class="abs" style="left:515px;top:678px;width:1px;height:32px;background:#cfcfcf"></div>
<div class="abs" style="left:621px;top:678px;width:1px;height:32px;background:#cfcfcf"></div>
<div class="abs" style="left:761px;top:678px;width:1px;height:32px;background:#cfcfcf"></div>
<div class="abs" style="left:899px;top:678px;width:1px;height:32px;background:#cfcfcf"></div>
<div class="abs" style="left:1065px;top:678px;width:1px;height:32px;background:#cfcfcf"></div>
<div class="abs" style="left:1150px;top:678px;width:1px;height:32px;background:#cfcfcf"></div>
<div class="abs" style="left:1219px;top:678px;width:1px;height:32px;background:#cfcfcf"></div>
<div class="abs" style="left:1326px;top:678px;width:1px;height:32px;background:#cfcfcf"></div>
<div class="abs" style="left:1402px;top:678px;width:1px;height:32px;background:#cfcfcf"></div>
<div class="abs" style="left:1495px;top:678px;width:1px;height:32px;background:#cfcfcf"></div>
<svg class="abs" style="left:213px;top:692px" width="8" height="8" viewBox="0 0 8 8"><rect x="0.5" y="0.5" width="7" height="7" fill="#fff" stroke="#8a8a8a"/><path d="M3 2.2H5V3H5.8V5H5V5.8H3V5H2.2V3H3Z" fill="#333"/></svg>
<div class="abs" style="left:225px;top:679px;width:216px;height:30px;display:flex;align-items:center;justify-content:center;padding:0 6px;color:#333"><div style="position:relative;top:1.5px;line-height:20px;text-align:center;white-space:nowrap"><a>arquiteturaquantica.com</a></div></div>
<svg class="abs" style="left:455px;top:678px" width="40" height="30" viewBox="0 0 40 30"><path d="M21.7 9.3H16.8A6.8 6.8 0 0 0 16.8 22.9H18.8L19.8 18.6H16.8A2.65 2.65 0 0 1 16.8 13.4H20.7Z" fill="#ff6c2c"/><path fill-rule="evenodd" d="M19.6 22.9H24.1L25.1 18.8H30A6.9 6.9 0 0 0 30 5H24.2ZM27.4 9.4H30.2A2.3 2.3 0 0 1 30.2 14H26.3Z" fill="#ff6c2c"/></svg>
<div class="abs" style="left:516px;top:679px;width:105px;height:30px;display:flex;align-items:center;justify-content:center;padding:0 6px;color:#333"><div style="position:relative;top:1.5px;line-height:20px;text-align:center;white-space:nowrap"><a>190.89.238.100</a></div></div>
<div class="abs" style="left:622px;top:679px;width:139px;height:30px;display:flex;align-items:center;justify-content:center;padding:0 6px;color:#333"><div style="position:relative;top:1.5px;line-height:20px;text-align:center;white-space:nowrap">arquiteturaquant</div></div>
<div class="abs" style="left:762px;top:679px;width:137px;height:30px;display:flex;align-items:center;justify-content:center;padding:0 6px;color:#333"><div style="position:relative;top:1.5px;line-height:20px;text-align:center;white-space:nowrap"><a>cido@spar.com.br</a></div></div>
<div class="abs" style="left:900px;top:679px;width:165px;height:30px;display:flex;align-items:center;justify-content:center;padding:0 6px;color:#333"><div style="position:relative;top:1.5px;line-height:20px;text-align:center;white-space:nowrap">2021-09-06 18:32</div></div>
<div class="abs" style="left:1066px;top:679px;width:84px;height:30px;display:flex;align-items:center;justify-content:center;padding:0 6px;color:#333"><div style="position:relative;top:1.5px;line-height:20px;text-align:center;white-space:nowrap">home</div></div>
<div class="abs" style="left:1151px;top:679px;width:68px;height:30px;display:flex;align-items:center;justify-content:flex-end;padding:0 5px;color:#333"><div style="position:relative;top:1.5px;line-height:20px;text-align:center;white-space:nowrap">10240 MB</div></div>
<div class="abs" style="left:1220px;top:679px;width:106px;height:30px;display:flex;align-items:center;justify-content:flex-end;padding:0 5px;color:#333"><div style="position:relative;top:1.5px;line-height:20px;text-align:center;white-space:nowrap">1 MB</div></div>
<div class="abs" style="left:1327px;top:679px;width:75px;height:30px;display:flex;align-items:center;justify-content:center;padding:0 6px;color:#333"><div style="position:relative;top:1.5px;line-height:20px;text-align:center;white-space:nowrap"><a>default</a></div></div>
<div class="abs" style="left:1403px;top:679px;width:92px;height:30px;display:flex;align-items:center;justify-content:flex-start;padding:0 5px;color:#333"><div style="position:relative;top:1.5px;line-height:20px;text-align:center;white-space:nowrap">paper_lantern</div></div>
<div class="abs" style="left:205px;top:709px;width:1400px;height:51px;background:#f2f2f2;border-top:1px solid #cfcfcf;border-bottom:1px solid #cfcfcf"></div>
<div class="abs" style="left:205px;top:709px;width:1px;height:51px;background:#cfcfcf"></div>
<div class="abs" style="left:227px;top:709px;width:1px;height:51px;background:#cfcfcf"></div>
<div class="abs" style="left:441px;top:709px;width:1px;height:51px;background:#cfcfcf"></div>
<div class="abs" style="left:515px;top:709px;width:1px;height:51px;background:#cfcfcf"></div>
<div class="abs" style="left:621px;top:709px;width:1px;height:51px;background:#cfcfcf"></div>
<div class="abs" style="left:761px;top:709px;width:1px;height:51px;background:#cfcfcf"></div>
<div class="abs" style="left:899px;top:709px;width:1px;height:51px;background:#cfcfcf"></div>
<div class="abs" style="left:1065px;top:709px;width:1px;height:51px;background:#cfcfcf"></div>
<div class="abs" style="left:1150px;top:709px;width:1px;height:51px;background:#cfcfcf"></div>
<div class="abs" style="left:1219px;top:709px;width:1px;height:51px;background:#cfcfcf"></div>
<div class="abs" style="left:1326px;top:709px;width:1px;height:51px;background:#cfcfcf"></div>
<div class="abs" style="left:1402px;top:709px;width:1px;height:51px;background:#cfcfcf"></div>
<div class="abs" style="left:1495px;top:709px;width:1px;height:51px;background:#cfcfcf"></div>
<svg class="abs" style="left:213px;top:732px" width="8" height="8" viewBox="0 0 8 8"><rect x="0.5" y="0.5" width="7" height="7" fill="#fff" stroke="#8a8a8a"/><path d="M3 2.2H5V3H5.8V5H5V5.8H3V5H2.2V3H3Z" fill="#333"/></svg>
<div class="abs" style="left:225px;top:710px;width:216px;height:49px;display:flex;align-items:center;justify-content:center;padding:0 6px;color:#333"><div style="position:relative;top:1.5px;line-height:20px;text-align:center;white-space:nowrap"><a>baruerionline.com.br</a></div></div>
<svg class="abs" style="left:455px;top:719px" width="40" height="30" viewBox="0 0 40 30"><path d="M21.7 9.3H16.8A6.8 6.8 0 0 0 16.8 22.9H18.8L19.8 18.6H16.8A2.65 2.65 0 0 1 16.8 13.4H20.7Z" fill="#ff6c2c"/><path fill-rule="evenodd" d="M19.6 22.9H24.1L25.1 18.8H30A6.9 6.9 0 0 0 30 5H24.2ZM27.4 9.4H30.2A2.3 2.3 0 0 1 30.2 14H26.3Z" fill="#ff6c2c"/></svg>
<div class="abs" style="left:516px;top:710px;width:105px;height:49px;display:flex;align-items:center;justify-content:center;padding:0 6px;color:#333"><div style="position:relative;top:1.5px;line-height:20px;text-align:center;white-space:nowrap"><a>190.89.238.100</a></div></div>
<div class="abs" style="left:622px;top:710px;width:139px;height:49px;display:flex;align-items:center;justify-content:center;padding:0 6px;color:#333"><div style="position:relative;top:1.5px;line-height:20px;text-align:center;white-space:nowrap">baruerionline</div></div>
<div class="abs" style="left:762px;top:710px;width:137px;height:49px;display:flex;align-items:center;justify-content:center;padding:0 6px;color:#333"><div style="position:relative;top:1.5px;line-height:20px;text-align:center;white-space:nowrap"><a>cido@spar.com.br</a></div></div>
<div class="abs" style="left:900px;top:710px;width:165px;height:49px;display:flex;align-items:center;justify-content:center;padding:0 6px;color:#333"><div style="position:relative;top:1.5px;line-height:20px;text-align:center;white-space:nowrap">2021-06-17 16:46</div></div>
<div class="abs" style="left:1066px;top:710px;width:84px;height:49px;display:flex;align-items:center;justify-content:center;padding:0 6px;color:#333"><div style="position:relative;top:1.5px;line-height:20px;text-align:center;white-space:nowrap">home</div></div>
<div class="abs" style="left:1151px;top:710px;width:68px;height:49px;display:flex;align-items:center;justify-content:flex-end;padding:0 5px;color:#333"><div style="position:relative;top:1.5px;line-height:20px;text-align:center;white-space:nowrap">2048 MB</div></div>
<div class="abs" style="left:1220px;top:710px;width:106px;height:49px;display:flex;align-items:center;justify-content:flex-end;padding:0 5px;color:#333"><div style="position:relative;top:1.5px;line-height:20px;text-align:center;white-space:nowrap">172 MB</div></div>
<div class="abs" style="left:1327px;top:710px;width:75px;height:49px;display:flex;align-items:center;justify-content:center;padding:0 6px;color:#333"><div style="position:relative;top:1.5px;line-height:20px;text-align:center;white-space:nowrap"><a>Plano<br>Inicial</a></div></div>
<div class="abs" style="left:1403px;top:710px;width:92px;height:49px;display:flex;align-items:center;justify-content:flex-start;padding:0 5px;color:#333"><div style="position:relative;top:1.5px;line-height:20px;text-align:center;white-space:nowrap">paper_lantern</div></div>
</div>
<div class="abs" style="left:0;top:0;width:1515px;height:740px;overflow:hidden">
<div class="abs" style="left:205px;top:241px;width:1400px;height:211px;background:#f3f3f3;border-left:1px solid #c8c8c8;border-bottom:1px solid #c4c4c4;box-shadow:inset 3px 3px 3px -1px rgba(0,0,0,.13), inset 0 -3px 3px -1px rgba(0,0,0,.13)"></div>
<div class="t" style="left:220px;top:251px;font-weight:bold;color:#333;line-height:16px">Alterar senha:</div>
<div style="position:absolute;height:22px;background:#fff;border:1px solid #8f8f9d;border-radius:2px;left:220px;top:274px;width:160px"></div>
<div style="position:absolute;height:31px;background:#428bca;border-radius:4px;color:#fff;font-size:13px;line-height:30px;text-align:center;white-space:nowrap;border:1px solid #3a7fc0;left:383px;top:271px;width:63px;line-height:31px">Alterar</div>
<div class="abs" style="left:220px;top:315px;width:11px;height:11px;border:1px solid #9a9aaa;border-radius:2px;background:#fff"></div>
<div class="t" style="left:238px;top:315px;color:#444">Habilitar autenticação resumida</div>
<svg class="abs" style="left:429px;top:314px" width="13" height="13" viewBox="0 0 13 13"><circle cx="6.5" cy="6.5" r="6.3" fill="#222"/><text x="6.5" y="10.4" text-anchor="middle" font-family="Liberation Sans" font-weight="bold" font-size="10.5" fill="#fff">?</text></svg>
<div class="abs" style="left:480px;top:249px;width:1px;height:90px;background:#d5d5d5"></div>
<div class="t" style="left:497px;top:251px;font-weight:bold;color:#333">Alterar email de contato:</div>
<div style="position:absolute;height:22px;background:#fff;border:1px solid #8f8f9d;border-radius:2px;left:496px;top:274px;width:161px"><span class="t" style="left:2px;top:2px;color:#333">cido@spar.com.br</span></div>
<div style="position:absolute;height:31px;background:#428bca;border-radius:4px;color:#fff;font-size:13px;line-height:30px;text-align:center;white-space:nowrap;border:1px solid #3a7fc0;left:660px;top:271px;width:63px;line-height:31px">Alterar</div>
<div class="abs" style="left:751px;top:249px;width:1px;height:112px;background:#d5d5d5"></div>
<div class="t" style="left:768px;top:251px;font-weight:bold;color:#333">Suspend Account</div>
<div style="position:absolute;height:22px;background:#fff;border:1px solid #8f8f9d;border-radius:2px;left:768px;top:271px;width:160px"></div>
<div style="position:absolute;height:31px;background:#428bca;border-radius:4px;color:#fff;font-size:13px;line-height:30px;text-align:center;white-space:nowrap;border:1px solid #3a7fc0;left:768px;top:293px;width:87px">Suspender</div>
<div class="abs" style="left:768px;top:336px;width:11px;height:11px;border:1px solid #9a9aaa;border-radius:2px;background:#fff"></div>
<div class="t" style="left:786px;top:336px;color:#444">Prevent unsuspending</div>
<svg class="abs" style="left:925px;top:336px" width="13" height="13" viewBox="0 0 13 13"><circle cx="6.5" cy="6.5" r="6.3" fill="#222"/><text x="6.5" y="10.4" text-anchor="middle" font-family="Liberation Sans" font-weight="bold" font-size="10.5" fill="#fff">?</text></svg>
<div class="abs" style="left:211px;top:375px;width:1400px;height:1px;background:#d2d2d2"></div>
<div class="t" style="left:220px;top:383px;font-weight:bold;color:#333">Ações:</div>
<div style="position:absolute;height:31px;background:#428bca;border-radius:4px;color:#fff;font-size:13px;line-height:30px;text-align:center;white-space:nowrap;border:1px solid #3a7fc0;left:215px;top:405px;width:136px;line-height:29.5px">Alterar endereço IP</div>
<div style="position:absolute;height:31px;background:#428bca;border-radius:4px;color:#fff;font-size:13px;line-height:30px;text-align:center;white-space:nowrap;border:1px solid #3a7fc0;left:355px;top:405px;width:167px;line-height:29.5px">Alterar partição do disco</div>
<div style="position:absolute;height:31px;background:#428bca;border-radius:4px;color:#fff;font-size:13px;line-height:30px;text-align:center;white-space:nowrap;border:1px solid #3a7fc0;left:524px;top:405px;width:93px;line-height:29.5px">Alterar cota</div>
<div style="position:absolute;height:31px;background:#428bca;border-radius:4px;color:#fff;font-size:13px;line-height:30px;text-align:center;white-space:nowrap;border:1px solid #3a7fc0;left:620px;top:405px;width:100px;line-height:29.5px">Alterar plano</div>
<div style="position:absolute;height:31px;background:#428bca;border-radius:4px;color:#fff;font-size:13px;line-height:30px;text-align:center;white-space:nowrap;border:1px solid #3a7fc0;left:723px;top:405px;width:115px;line-height:29.5px">Modificar conta</div>
<div style="position:absolute;height:31px;background:#428bca;border-radius:4px;color:#fff;font-size:13px;line-height:30px;text-align:center;white-space:nowrap;border:1px solid #3a7fc0;left:841px;top:405px;width:110px;line-height:29.5px">Encerrar conta</div>
</div>
<svg class="abs" style="left:0;top:0" width="1525" height="748" viewBox="0 0 1525 748"><line x1="294.5" y1="357" x2="231" y2="257" stroke="#ff0000" stroke-width="5"/><path d="M217 235.5L244 251.5L220 266.5Z" fill="#ff0000"/><line x1="636" y1="328" x2="730" y2="389" stroke="#ff0000" stroke-width="5"/><path d="M748 401L732.5 374.5L718 397Z" fill="#ff0000"/></svg>
<div class="abs" style="left:1518px;top:177px;width:6px;height:206px;background:#737373;border-radius:3px"></div>
<div class="abs" style="left:190px;top:743px;width:1044px;height:6px;background:#737373;border-radius:3px"></div>
<div class="abs" style="left:1499px;top:694px;width:30px;height:27px;background:#293a4a;border-radius:4px"></div>
<svg class="abs" style="left:1499px;top:694px" width="26" height="27" viewBox="0 0 26 27"><circle cx="18.5" cy="17.5" r="5.4" fill="#bdbdbd"/><circle cx="16.6" cy="16.4" r="0.7" fill="#555"/><circle cx="20.3" cy="16.4" r="0.7" fill="#555"/><path d="M16.3 20.3Q18.5 18.3 20.7 20.3" stroke="#555" stroke-width="0.8" fill="none"/><circle cx="10.5" cy="10" r="6.2" fill="#fff"/><rect x="8" y="7.3" width="1.3" height="2.4" fill="#293a4a"/><rect x="11.8" y="7.3" width="1.3" height="2.4" fill="#293a4a"/><path d="M7.5 11.8Q10.5 14.6 13.5 11.8" stroke="#293a4a" stroke-width="1.2" fill="none"/></svg>
</body></html>
